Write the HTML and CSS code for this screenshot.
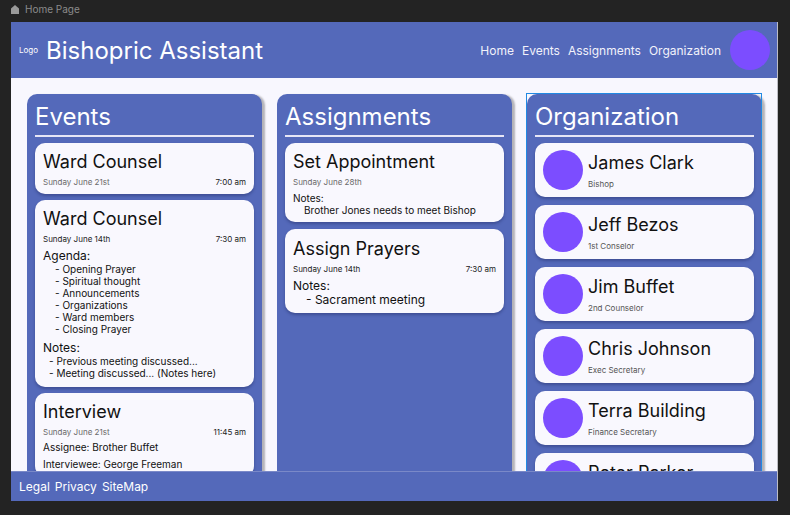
FILE: index.html
```html
<!DOCTYPE html>
<html>
<head>
<meta charset="utf-8">
<link rel="stylesheet" href="styles.css">
</head>
<body>
<div class="topbar">
  <svg class="home-ico" width="8" height="9" viewBox="0 0 8 9"><path d="M4 0 L8 3.5 V9 H0 V3.5 Z" fill="#9a9a9a"/></svg>
  <span>Home Page</span>
</div>
<div class="app">
  <header class="header">
    <span class="logo">Logo</span>
    <span class="brand">Bishopric Assistant</span>
    <nav class="nav">
      <span>Home</span><span>Events</span><span>Assignments</span><span>Organization</span>
    </nav>
    <div class="avatar big"></div>
  </header>
  <main class="main">
    <section class="col events">
      <h2 class="col-title">Events</h2>
      <div class="divider"></div>
      <div class="card">
        <div class="card-title">Ward Counsel</div>
        <div class="meta"><span class="muted">Sunday June 21st</span><span>7:00 am</span></div>
      </div>
      <div class="card">
        <div class="card-title">Ward Counsel</div>
        <div class="meta"><span>Sunday June 14th</span><span>7:30 am</span></div>
        <div class="label">Agenda:</div>
        <div class="item deep">- Opening Prayer</div>
        <div class="item deep">- Spiritual thought</div>
        <div class="item deep">- Announcements</div>
        <div class="item deep">- Organizations</div>
        <div class="item deep">- Ward members</div>
        <div class="item deep">- Closing Prayer</div>
        <div class="label gap">Notes:</div>
        <div class="item shallow">- Previous meeting discussed...</div>
        <div class="item shallow">- Meeting discussed... (Notes here)</div>
      </div>
      <div class="card">
        <div class="card-title">Interview</div>
        <div class="meta"><span class="muted">Sunday June 21st</span><span>11:45 am</span></div>
        <div class="line first">Assignee: Brother Buffet</div>
        <div class="line">Interviewee: George Freeman</div>
      </div>
    </section>
    <section class="col assign">
      <h2 class="col-title">Assignments</h2>
      <div class="divider"></div>
      <div class="card">
        <div class="card-title">Set Appointment</div>
        <div class="meta"><span class="muted">Sunday June 28th</span></div>
        <div class="small-label">Notes:</div>
        <div class="item note">Brother Jones needs to meet Bishop</div>
      </div>
      <div class="card">
        <div class="card-title">Assign Prayers</div>
        <div class="meta"><span>Sunday June 14th</span><span>7:30 am</span></div>
        <div class="label">Notes:</div>
        <div class="big-item">- Sacrament meeting</div>
      </div>
    </section>
    <section class="col selected">
      <h2 class="col-title">Organization</h2>
      <div class="divider"></div>
      <div class="person"><div class="avatar"></div><div class="pinfo"><div class="pname">James Clark</div><div class="prole">Bishop</div></div></div>
      <div class="person"><div class="avatar"></div><div class="pinfo"><div class="pname">Jeff Bezos</div><div class="prole">1st Conselor</div></div></div>
      <div class="person"><div class="avatar"></div><div class="pinfo"><div class="pname">Jim Buffet</div><div class="prole">2nd Counselor</div></div></div>
      <div class="person"><div class="avatar"></div><div class="pinfo"><div class="pname">Chris Johnson</div><div class="prole">Exec Secretary</div></div></div>
      <div class="person"><div class="avatar"></div><div class="pinfo"><div class="pname">Terra Building</div><div class="prole">Finance Secretary</div></div></div>
      <div class="person"><div class="avatar"></div><div class="pinfo"><div class="pname">Peter Parker</div><div class="prole">Clerk</div></div></div>
    </section>
  </main>
  <footer class="footer">
    <span>Legal</span><span>Privacy</span><span>SiteMap</span>
  </footer>
</div>
</body>
</html>
```
FILE: styles.css
```css
* { box-sizing: border-box; margin: 0; padding: 0; }
html, body { width: 790px; height: 515px; overflow: hidden; }
body {
  background: #232323;
  font-family: Inter, "Liberation Sans", sans-serif;
  color: #111;
}
.topbar {
  height: 22px;
  display: flex;
  align-items: flex-start;
  padding: 4px 0 0 11px;
  gap: 6px;
  color: #8b8b8b;
  font-size: 10px;
  line-height: 11px;
}
.home-ico { margin-top: 1px; }
.app {
  margin-left: 11px;
  width: 766px;
  height: 479px;
  display: flex;
  flex-direction: column;
  background: #f8f7fe;
  box-shadow: 1px 0 0 #bdbdc4;
}
.header {
  height: 56px;
  flex: none;
  background: #5469ba;
  color: #fff;
  display: flex;
  align-items: center;
  padding: 0 7px 0 8px;
}
.logo { font-size: 8px; margin-right: 8px; }
.brand { font-size: 24px; font-weight: 400; }
.nav {
  margin-left: auto;
  display: flex;
  gap: 8px;
  font-size: 12px;
  margin-right: 9px;
  color: #f2f2fa;
}
.avatar {
  width: 40px;
  height: 40px;
  border-radius: 50%;
  background: #7c4dff;
  flex: none;
}
.main {
  flex: 1;
  min-height: 0;
  overflow: hidden;
  display: grid;
  grid-template-columns: repeat(3, 235px);
  gap: 15px;
  padding: 16px 15px 0 16px;
  align-items: start;
}
.col {
  position: relative;
  background: #5469ba;
  border-radius: 10px 10px 0 0;
  padding: 7px 8px 40px;
  min-height: 420px;
  box-shadow: 3px 1px 2px rgba(0, 0, 0, 0.28);
}
.col.selected::after {
  content: "";
  position: absolute;
  left: -1px;
  top: -1px;
  right: 0;
  bottom: 0;
  border: 1px solid #2189e3;
  pointer-events: none;
}
.col-title {
  font-size: 24px;
  font-weight: 400;
  line-height: 32px;
  color: #fff;
}
.divider {
  height: 2px;
  background: #e6e6f6;
  margin: 2px 0 6px;
}
.card {
  background: #f9f8fe;
  border-radius: 10px;
  padding: 7px 8px 6px;
  margin-bottom: 6px;
  box-shadow: 0 2px 3px rgba(20, 30, 80, 0.35);
}
.assign .card { margin-bottom: 7px; }
.card-title { font-size: 18px; line-height: 24px; }
.meta {
  display: flex;
  justify-content: space-between;
  font-size: 8px;
  line-height: 12px;
  margin-top: 2px;
  color: #222;
}
.muted { color: #6a6a6a; }
.label { font-size: 12px; line-height: 14px; margin-top: 4px; }
.label.gap { margin-top: 6px; }
.item { font-size: 10px; line-height: 12px; }
.item.deep { padding-left: 12px; }
.item.shallow { padding-left: 6px; }
.item.note { padding-left: 11px; }
.events .card:nth-child(4) { padding-bottom: 8px; }
.small-label { font-size: 10px; line-height: 12px; margin-top: 4px; }
.big-item { font-size: 12px; line-height: 14px; padding-left: 13px; }
.assign .card:nth-child(4) .card-title { margin-top: 1px; }
.line { font-size: 10px; line-height: 12px; margin-top: 5px; }
.line.first { margin-top: 3px; }
.person {
  background: #f9f8fe;
  border-radius: 10px;
  height: 54px;
  margin-bottom: 8px;
  display: flex;
  align-items: center;
  padding-left: 8px;
  gap: 5px;
  box-shadow: 0 2px 3px rgba(20, 30, 80, 0.35);
}
.selected .divider { margin-bottom: 6px; }
.pname { font-size: 18px; line-height: 24px; }
.prole { font-size: 8px; line-height: 12px; margin-top: 3px; color: #555; }
.footer {
  height: 30px;
  flex: none;
  background: #5469ba;
  border-top: 1px solid #7a89c8;
  color: #fff;
  display: flex;
  align-items: center;
  gap: 5px;
  padding-left: 8px;
  font-size: 12px;
  position: relative;
  z-index: 1;
}
```
